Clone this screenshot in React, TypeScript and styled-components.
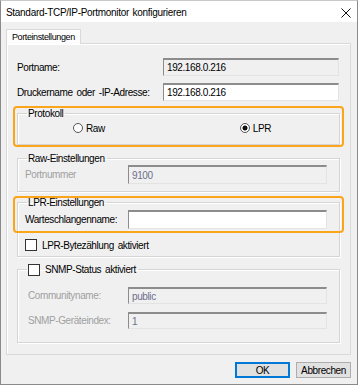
import React from 'react';
import styled, { createGlobalStyle } from 'styled-components';

const Global = createGlobalStyle`
  html, body {
    margin: 0;
    padding: 0;
    background: #f0f0f0;
  }
  * {
    box-sizing: border-box;
  }
`;

const Window = styled.div`
  width: 358px;
  height: 385px;
  background: #f0f0f0;
  border: 1px solid #8a8a8a;
  border-top-color: #c8c8c8;
  font-family: 'Liberation Sans', Arial, sans-serif;
  font-size: 10px;
  letter-spacing: -0.4px;
  word-spacing: 1.5px;
  color: #000;
  display: flex;
  flex-direction: column;
  overflow: hidden;
`;

const TitleBar = styled.div`
  height: 21px;
  background: #fff;
  display: flex;
  align-items: center;
  justify-content: space-between;
  padding: 2px 6px 0 5px;
  font-size: 10px;
  letter-spacing: -0.3px;
  word-spacing: 1px;
`;

const Body = styled.div`
  padding: 7px 6px 0 5px;
  display: flex;
  flex-direction: column;
`;

const TabStrip = styled.div`
  display: flex;
  height: 14px;
`;

const Tab = styled.div`
  height: 15px;
  padding: 0 5px;
  font-size: 9px;
  letter-spacing: -0.4px;
  background: #fdfdfd;
  border: 1px solid #d9d9d9;
  border-bottom: none;
  display: flex;
  align-items: center;
  position: relative;
  z-index: 1;
`;

const Panel = styled.div`
  height: 312px;
  border: 1px solid #d9d9d9;
  background: #f0f0f0;
  box-shadow: inset 1px 1px 0 #fff;
  padding: 14px 10px 0 10px;
  display: flex;
  flex-direction: column;
`;

const Row = styled.div<{ $mt?: number; $h?: number }>`
  display: flex;
  align-items: center;
  height: ${p => p.$h ?? 18}px;
  margin-top: ${p => p.$mt ?? 0}px;
`;

const Label = styled.span<{ $w: number; $disabled?: boolean; $pl?: number }>`
  width: ${p => p.$w}px;
  padding-left: ${p => p.$pl ?? 0}px;
  flex-shrink: 0;
  color: ${p => (p.$disabled ? '#a0a0a0' : '#000')};
  white-space: nowrap;
`;

const Field = styled.div<{ $w: number; $readonly?: boolean; $disabled?: boolean; $h?: number }>`
  width: ${p => p.$w}px;
  height: ${p => p.$h ?? 18}px;
  flex-shrink: 0;
  background: ${p => (p.$readonly || p.$disabled ? '#f0f0f0' : '#fff')};
  border: 1px solid;
  border-color: #8c8c8c #e3e3e3 #e3e3e3 #8c8c8c;
  border-top-width: 2px;
  display: flex;
  align-items: center;
  padding-left: 3px;
  color: ${p => (p.$disabled ? '#6c6f8c' : '#000')};
`;

const Highlight = styled.div<{ $mt: number }>`
  position: relative;
  margin-top: ${p => p.$mt}px;
`;

const Ring = styled.div<{ $h: number; $top: number }>`
  position: absolute;
  left: -4px;
  right: -4px;
  top: ${p => p.$top}px;
  height: ${p => p.$h}px;
  border: 2px solid #fba51a;
  border-radius: 4px;
  pointer-events: none;
`;

const Group = styled.fieldset<{ $mt?: number; $h: number }>`
  margin: ${p => p.$mt ?? 0}px 0 0 0;
  padding: 0 10px 0 7px;
  height: ${p => p.$h}px;
  border: 1px solid #d5d5d5;
  box-shadow: 1px 1px 0 #fff, inset 1px 1px 0 #fff;
  min-width: 0;
  display: flex;
  flex-direction: column;
`;

const Legend = styled.legend`
  padding: 2px 2px 0 1px;
  margin-left: 2px;
  height: 12px;
  line-height: 10px;
  display: flex;
  align-items: center;
`;

const RadioRow = styled.div`
  display: flex;
  align-items: center;
  height: 18px;
`;

const Radio = styled.span<{ $x: number; $checked?: boolean }>`
  display: flex;
  align-items: center;
  margin-left: ${p => p.$x}px;
  gap: 3px;
  &::before {
    content: '';
    width: 10px;
    height: 10px;
    border-radius: 50%;
    border: 1px solid #555;
    background: #fff;
    box-sizing: border-box;
    ${p =>
      p.$checked
        ? 'background: radial-gradient(circle, #111 0 2.2px, #fff 2.8px);'
        : ''}
  }
`;

const Check = styled.span`
  display: flex;
  align-items: center;
  gap: 5px;
  &::before {
    content: '';
    width: 12px;
    height: 12px;
    border: 1px solid #333;
    background: #fff;
    box-sizing: border-box;
  }
`;

const CheckRow = styled.div<{ $mt: number }>`
  display: flex;
  align-items: center;
  height: 12px;
  margin-top: ${p => p.$mt}px;
`;

const Footer = styled.div`
  display: flex;
  justify-content: flex-end;
  gap: 6px;
  padding: 7px 0 0 0;
`;

const Button = styled.button<{ $focus?: boolean }>`
  width: 55px;
  height: 16px;
  padding: 0;
  font: inherit;
  letter-spacing: inherit;
  color: #000;
  background: #e1e1e1;
  border: 1px solid ${p => (p.$focus ? '#0078d7' : '#adadad')};
  box-shadow: ${p => (p.$focus ? 'inset 0 0 0 1px #0078d7' : 'none')};
`;

const Close = () => (
  <svg width="10" height="10" viewBox="0 0 10 10">
    <path d="M0.5 0.5 L9.5 9.5 M9.5 0.5 L0.5 9.5" stroke="#111" strokeWidth="1" />
  </svg>
);

export default function App() {
  return (
    <>
      <Global />
      <Window>
        <TitleBar>
          <span>Standard-TCP/IP-Portmonitor konfigurieren</span>
          <Close />
        </TitleBar>
        <Body>
          <TabStrip>
            <Tab>Porteinstellungen</Tab>
          </TabStrip>
          <Panel>
            <Row>
              <Label $w={146}>Portname:</Label>
              <Field $w={176} $readonly>192.168.0.216</Field>
            </Row>
            <Row $mt={7}>
              <Label $w={146}>Druckername oder -IP-Adresse:</Label>
              <Field $w={176}>192.168.0.216</Field>
            </Row>

            <Highlight $mt={6}>
              <Ring $top={-1} $h={41} />
              <Group $h={38}>
                <Legend>Protokoll</Legend>
                <RadioRow>
                  <Radio $x={48}>Raw</Radio>
                  <Radio $x={135} $checked>LPR</Radio>
                </RadioRow>
              </Group>
            </Highlight>

            <Group $mt={7} $h={40}>
              <Legend>Raw-Einstellungen</Legend>
              <Row $mt={1} $h={19}>
                <Label $w={103} $disabled>Portnummer</Label>
                <Field $w={199} $h={19} $disabled>9100</Field>
              </Row>
            </Group>

            <Highlight $mt={4}>
              <Ring $top={0} $h={37} />
              <Group $h={61}>
                <Legend>LPR-Einstellungen</Legend>
                <Row $mt={2} $h={19}>
                  <Label $w={103}>Warteschlangenname:</Label>
                  <Field $w={199} $h={19} />
                </Row>
                <CheckRow $mt={10}>
                  <Check>LPR-Bytezählung aktiviert</Check>
                </CheckRow>
              </Group>
            </Highlight>

            <Group $mt={6} $h={80}>
              <Legend>
                <Check>SNMP-Status aktiviert</Check>
              </Legend>
              <Row $mt={12} $h={17}>
                <Label $w={103} $pl={3} $disabled>Communityname:</Label>
                <Field $w={199} $h={17} $disabled>public</Field>
              </Row>
              <Row $mt={8} $h={17}>
                <Label $w={103} $pl={3} $disabled>SNMP-Geräteindex:</Label>
                <Field $w={199} $h={17} $disabled>1</Field>
              </Row>
            </Group>
          </Panel>
          <Footer>
            <Button $focus>OK</Button>
            <Button>Abbrechen</Button>
          </Footer>
        </Body>
      </Window>
    </>
  );
}
